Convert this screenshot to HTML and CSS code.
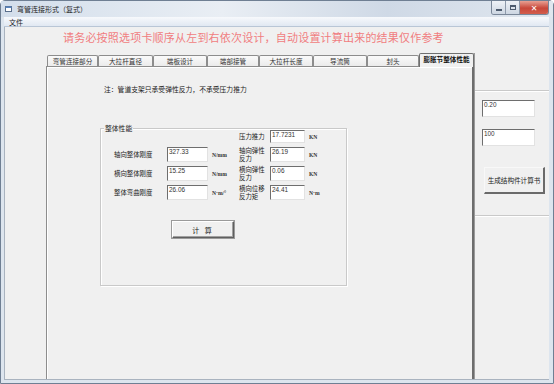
FILE: index.html
```html
<!DOCTYPE html>
<html lang="zh-CN">

<head>
  <meta charset="UTF-8" />
  <title>弯管连接形式（复式）</title>
  <link rel="stylesheet" href="styles.css">
</head>

<body>
  <div class="window">
    <div class="titlebar">
      <svg class="app-icon" width="8" height="8" viewBox="0 0 8 8">
        <rect x="0.5" y="1.5" width="6" height="5" fill="#fff" stroke="#5a6f8c" />
        <rect x="0.5" y="1.5" width="6" height="1.5" fill="#5a86c0" />
      </svg>
      <span class="title">弯管连接形式（复式）</span>
      <div class="controls">
        <div class="ctl ctl-min"><span></span></div>
        <div class="ctl ctl-max"><span></span></div>
        <div class="ctl ctl-close">✕</div>
      </div>
    </div>
    <div class="menubar"><span class="menu-item">文件</span></div>

    <div class="client">
      <div class="notice">请务必按照选项卡顺序从左到右依次设计，自动设置计算出来的结果仅作参考</div>

      <div class="main">
        <div class="tabctl">
          <div class="tabstrip">
            <div class="tab w51">弯管连接部分</div>
            <div class="tab w55">大拉杆直径</div>
            <div class="tab w54">端板设计</div>
            <div class="tab w52">端部接管</div>
            <div class="tab w54">大拉杆长度</div>
            <div class="tab w54">导流筒</div>
            <div class="tab w52">封头</div>
            <div class="tab active">膨胀节整体性能</div>
          </div>
          <div class="tabpanel">
            <p class="note">注：管道支架只承受弹性反力，不承受压力推力</p>

            <div class="groupbox">
              <span class="legend">整体性能</span>
              <div class="grid">
                <span></span><span></span><span></span>
                <span class="lbl">压力推力</span>
                <div class="field">17.7231</div>
                <span class="unit">KN</span>

                <span class="lbl">轴向整体刚度</span>
                <div class="field">327.33</div>
                <span class="unit">N/mm</span>
                <span class="lbl two">轴向弹性<br>反力</span>
                <div class="field">26.19</div>
                <span class="unit">KN</span>

                <span class="lbl">横向整体刚度</span>
                <div class="field">15.25</div>
                <span class="unit">N/mm</span>
                <span class="lbl two">横向弹性<br>反力</span>
                <div class="field">0.06</div>
                <span class="unit">KN</span>

                <span class="lbl">整体弯曲刚度</span>
                <div class="field">26.06</div>
                <span class="unit">N·m/°</span>
                <span class="lbl two">横向位移<br>反力矩</span>
                <div class="field">24.41</div>
                <span class="unit">N·m</span>
              </div>
              <div class="btn calc">计 算</div>
            </div>
          </div>
        </div>

        <div class="side">
          <div class="side-top"></div>
          <div class="side-box">
            <div class="field wide">0.20</div>
            <div class="field wide">100</div>
            <div class="btn report">生成结构件计算书</div>
          </div>
          <div class="side-rest"></div>
        </div>
      </div>
    </div>
  </div>
</body>

</html>
```

FILE: styles.css
```css
* {
  margin: 0;
  padding: 0;
  box-sizing: border-box;
}

body {
  width: 554px;
  height: 384px;
  overflow: hidden;
  background: #fff;
  font-family: "Noto Sans CJK SC", "DejaVu Sans", sans-serif;
  color: #222;
}

.window {
  width: 554px;
  height: 384px;
  display: flex;
  flex-direction: column;
  background: #dde5ee;
  border: 1px solid #6f7f93;
  border-radius: 5px 5px 0 0;
  padding: 0 4px 3px 3px;
}

/* 标题栏 */
.titlebar {
  height: 16px;
  display: flex;
  align-items: center;
  gap: 4px;
  background: linear-gradient(90deg, #d3deeb, #e9eef4 40%, #cfd9e6 70%, #e0e7ef);
  margin: 0 -4px 0 -3px;
  padding-left: 4px;
}

.title {
  font-size: 7px;
  color: #1e1e1e;
}

.controls {
  margin-left: auto;
  margin-right: 4px;
  display: flex;
  align-self: flex-start;
  border: 1px solid #7a8799;
  border-top: none;
  border-radius: 0 0 3px 3px;
  overflow: hidden;
}

.ctl {
  height: 13px;
  width: 14px;
  display: flex;
  align-items: center;
  justify-content: center;
  background: linear-gradient(#eef2f7, #cdd6e2);
  border-right: 1px solid #8e9aab;
}

.ctl-min span {
  width: 6px;
  height: 2px;
  margin-top: 5px;
  background: #4d5b6e;
}

.ctl-max span {
  width: 6px;
  height: 5px;
  border: 1px solid #4d5b6e;
  border-top-width: 2px;
}

.ctl-close {
  width: 28px;
  border-right: none;
  background: linear-gradient(#e8a093, #c8473a 55%, #d35e4d);
  color: #fff;
  font-size: 8px;
  font-weight: bold;
}

/* 菜单栏 */
.menubar {
  height: 10px;
  display: flex;
  align-items: center;
  background: linear-gradient(#f7f9fc, #e1e8f2);
  border-bottom: 1px solid #b9c6d6;
  padding-left: 5px;
}

.menu-item {
  font-size: 7px;
  line-height: 8px;
}

/* 客户区 */
.client {
  flex: 1;
  display: flex;
  flex-direction: column;
  background: #f0f0f0;
  border-left: 1px solid #a9b3bf;
  border-bottom: 1px solid #a9b3bf;
}

.notice {
  height: 26px;
  padding-top: 2px;
  padding-left: 58px;
  font-size: 11px;
  letter-spacing: 0.2px;
  color: #f07d80;
  white-space: nowrap;
}

.main {
  flex: 1;
  display: flex;
}

.tabctl {
  width: 428px;
  margin-left: 41px;
  display: flex;
  flex-direction: column;
}

.tabstrip {
  height: 13px;
  display: flex;
  align-items: flex-end;
  padding-left: 1px;
}

.tab {
  height: 11px;
  font-size: 6.6px;
  line-height: 10px;
  text-align: center;
  white-space: nowrap;
  color: #333;
  background: linear-gradient(#fafafa, #ebebeb);
  border: 1px solid #8d8d8d;
  border-bottom: none;
  border-radius: 2px 2px 0 0;
}

.w51 { width: 51px; }
.w52 { width: 52px; }
.w54 { width: 54px; }
.w55 { width: 55px; }

.tab.active {
  width: 55px;
  height: 14px;
  margin-bottom: -1px;
  font-weight: bold;
  color: #111;
  background: #f0f0f0;
  border-color: #6f6f6f;
  position: relative;
}

.tabpanel {
  flex: 1;
  border-top: 1px solid #8d8d8d;
  border-left: 1px solid #8d8d8d;
  border-right: 2px solid #6d6d6d;
  box-shadow: inset 1px 1px 0 #fff;
  padding: 17px 0 0 53px;
}

.note {
  font-size: 6.8px;
  padding-left: 4px;
  height: 15px;
}

/* 整体性能 */
.groupbox {
  width: 247px;
  height: 158px;
  margin-top: 29px;
  border: 1px solid #c9c9c9;
  box-shadow: 1px 1px 0 #fff, inset 1px 1px 0 #fff;
  position: relative;
  padding: 1px 0 0 13px;
}

.legend {
  position: absolute;
  left: 3px;
  top: -6px;
  background: #f0f0f0;
  padding: 0 1px;
  font-size: 6.8px;
  line-height: 10px;
}

.grid {
  display: grid;
  grid-template-columns: 53px 41px 31px 31px 35px auto;
  grid-template-rows: 13px 15px 15px 15px;
  row-gap: 4px;
  align-items: center;
}

.lbl {
  font-size: 6.4px;
  line-height: 7.5px;
  white-space: nowrap;
}

.unit {
  font-size: 5.6px;
  padding-left: 4px;
  font-family: "Liberation Serif", serif;
  font-weight: bold;
  color: #333;
}

.field {
  height: 100%;
  background: #fff;
  border-top: 1px solid #6e6e6e;
  border-left: 1px solid #6e6e6e;
  border-right: 1px solid #e2e2e2;
  border-bottom: 1px solid #e2e2e2;
  font-family: "Liberation Sans", sans-serif;
  font-size: 6.4px;
  line-height: 8px;
  padding-left: 1px;
  color: #333;
}

.btn {
  display: flex;
  align-items: center;
  justify-content: center;
  background: #f0f0f0;
  border: 1px solid #fff;
  border-right-color: #5f5f5f;
  border-bottom-color: #5f5f5f;
  outline: 1px solid #9a9a9a;
  font-size: 7px;
  white-space: nowrap;
}

.calc {
  width: 62px;
  height: 17px;
  margin: 21px 0 0 58px;
  letter-spacing: 2px;
  box-shadow: inset -1px -1px 0 #a0a0a0;
}

/* 右侧面板 */
.side {
  flex: 1;
  display: flex;
  flex-direction: column;
  border-left: 1px solid #9a9a9a;
}

.side-top {
  height: 37px;
}

.side-box {
  height: 126px;
  border-top: 1px solid #c9c9c9;
  border-bottom: 1px solid #c9c9c9;
  box-shadow: inset 0 1px 0 #fff, 0 1px 0 #fff;
  padding: 9px 0 0 7px;
  display: flex;
  flex-direction: column;
}

.field.wide {
  width: 53px;
  height: 17px;
  flex: none;
  margin-bottom: 12px;
}

.report {
  width: 61px;
  height: 27px;
  margin-top: 9px;
  margin-left: 2px;
  font-size: 6.6px;
  outline: none;
  border: 1px solid #f8f8f8;
  border-right: 2px solid #6a6a6a;
  border-bottom: 2px solid #6a6a6a;
}
```
